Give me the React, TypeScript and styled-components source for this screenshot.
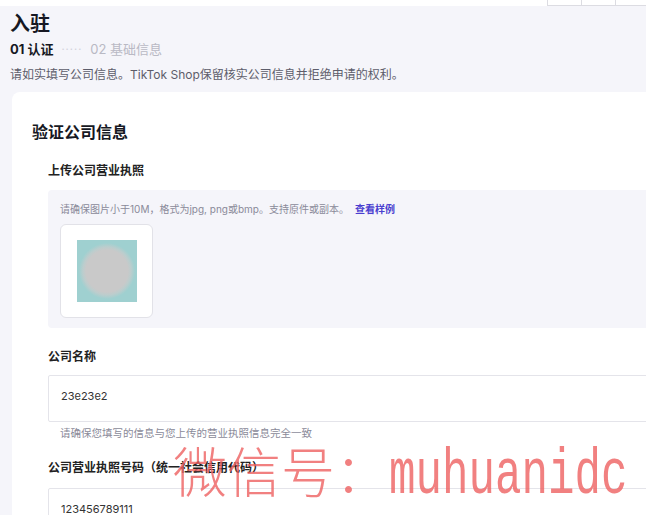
import React from "react";
import styled, { createGlobalStyle } from "styled-components";

const GlobalStyle = createGlobalStyle`
    body {
        margin: 0;
        background: #f5f5fa;
        font-family: Inter, "Noto Sans CJK SC", sans-serif;
        color: #161823;
        overflow: hidden;
    }
`;

const Page = styled.div`
    position: relative;
    height: 515px;
    overflow: hidden;
`;

const TopBar = styled.div`
    height: 6px;
    background: #fff;
    display: flex;
    justify-content: flex-end;
`;

const Pager = styled.div`
    display: flex;
    margin-right: -3px;
    margin-left: auto;
`;

const PagerCell = styled.div`
    width: 33px;
    height: 5px;
    border: 1px solid #dcdce2;
    border-top: none;
    border-right: none;
    background: #fff;
`;

const Head = styled.div`
    padding: 4px 10px 0;
`;

const Title = styled.h1`
    margin: 0;
    font-size: 20px;
    line-height: 28px;
    font-weight: 700;
`;

const Steps = styled.div`
    display: flex;
    align-items: center;
    gap: 8px;
    margin-top: 1px;
    font-size: 13px;
    line-height: 20px;
`;

const Step = styled.span<{ $active?: boolean }>`
    font-weight: ${(p) => (p.$active ? 700 : 400)};
    color: ${(p) => (p.$active ? "#161823" : "#b9b9c4")};
`;

const Dots = styled.span`
    color: #d2d2da;
    letter-spacing: 1px;
    font-size: 11px;
`;

const Desc = styled.p`
    margin: 7px 0 0;
    font-size: 12px;
    line-height: 18px;
    color: #5d5d6b;
`;

const Card = styled.section`
    margin: 8px -40px 0 12px;
    background: #fff;
    border-radius: 8px;
    padding: 28px 0 0 20px;
    min-height: 430px;
`;

const CardTitle = styled.h2`
    margin: 0;
    font-size: 16px;
    line-height: 24px;
    font-weight: 700;
`;

const Field = styled.div<{ $gap: number }>`
    margin: ${(p) => p.$gap}px 0 0 16px;
`;

const Label = styled.div`
    font-size: 12px;
    line-height: 18px;
    font-weight: 600;
    color: #222;
`;

const UploadBox = styled.div`
    margin-top: 10px;
    background: #f5f5fa;
    border-radius: 4px;
    padding: 12px 12px 10px;
`;

const Hint = styled.div`
    font-size: 10px;
    line-height: 14px;
    color: #8a8a99;
`;

const Link = styled.a`
    margin-left: 6px;
    color: #4b3fd0;
    font-weight: 600;
    text-decoration: none;
`;

const Thumb = styled.div`
    margin-top: 8px;
    width: 91px;
    height: 92px;
    background: #fff;
    border: 1px solid #e2e2e8;
    border-radius: 6px;
    display: flex;
    align-items: center;
    justify-content: center;
`;

const ThumbImage = styled.div`
    width: 60px;
    height: 62px;
    background: radial-gradient(
        circle at 50% 50%,
        #c9c9c9 0 21px,
        #bccdcd 24px,
        #9fd0d0 28px
    );
`;

const Input = styled.div<{ $gap: number }>`
    margin-top: ${(p) => p.$gap}px;
    height: 45px;
    box-sizing: content-box;
    border: 1px solid #e4e4ea;
    border-radius: 2px;
    padding: 0 0 0 12px;
    font-size: 11px;
    line-height: 14px;
    color: #333;
    background: #fff;

    span {
        display: block;
        padding-top: 13px;
    }
`;

const Helper = styled(Hint)`
    margin-top: 5px;
    padding-left: 12px;
    font-size: 10.5px;
`;

const Watermark = styled.div`
    position: absolute;
    left: 173px;
    top: 438px;
    display: flex;
    align-items: baseline;
    color: rgba(238, 96, 96, 0.8);
    pointer-events: none;
    white-space: nowrap;
`;

const WatermarkCjk = styled.span`
    font-family: "Noto Sans CJK SC", sans-serif;
    font-weight: 300;
    font-size: 54px;
    line-height: 64px;
`;

const WatermarkLatin = styled.span`
    display: inline-block;
    font-family: "Liberation Mono", monospace;
    font-size: 64px;
    line-height: 64px;
    transform: scaleX(0.69);
    transform-origin: left;
`;

export default function App() {
    return (
        <>
            <GlobalStyle />
            <Page>
                <TopBar>
                    <Pager>
                        <PagerCell />
                        <PagerCell />
                        <PagerCell />
                    </Pager>
                </TopBar>

                <Head>
                    <Title>入驻</Title>
                    <Steps>
                        <Step $active>01 认证</Step>
                        <Dots>·····</Dots>
                        <Step>02 基础信息</Step>
                    </Steps>
                    <Desc>
                        请如实填写公司信息。TikTok Shop保留核实公司信息并拒绝申请的权利。
                    </Desc>
                </Head>

                <Card>
                    <CardTitle>验证公司信息</CardTitle>

                    <Field $gap={18}>
                        <Label>上传公司营业执照</Label>
                        <UploadBox>
                            <Hint>
                                请确保图片小于10M，格式为jpg, png或bmp。支持原件或副本。
                                <Link>查看样例</Link>
                            </Hint>
                            <Thumb>
                                <ThumbImage />
                            </Thumb>
                        </UploadBox>
                    </Field>

                    <Field $gap={20}>
                        <Label>公司名称</Label>
                        <Input $gap={9}>
                            <span>23e23e2</span>
                        </Input>
                        <Helper>请确保您填写的信息与您上传的营业执照信息完全一致</Helper>
                    </Field>

                    <Field $gap={18}>
                        <Label>公司营业执照号码（统一社会信用代码）</Label>
                        <Input $gap={11}>
                            <span>123456789111</span>
                        </Input>
                    </Field>
                </Card>

                <Watermark>
                    <WatermarkCjk>微信号：</WatermarkCjk>
                    <WatermarkLatin>muhuanidc</WatermarkLatin>
                </Watermark>
            </Page>
        </>
    );
}
